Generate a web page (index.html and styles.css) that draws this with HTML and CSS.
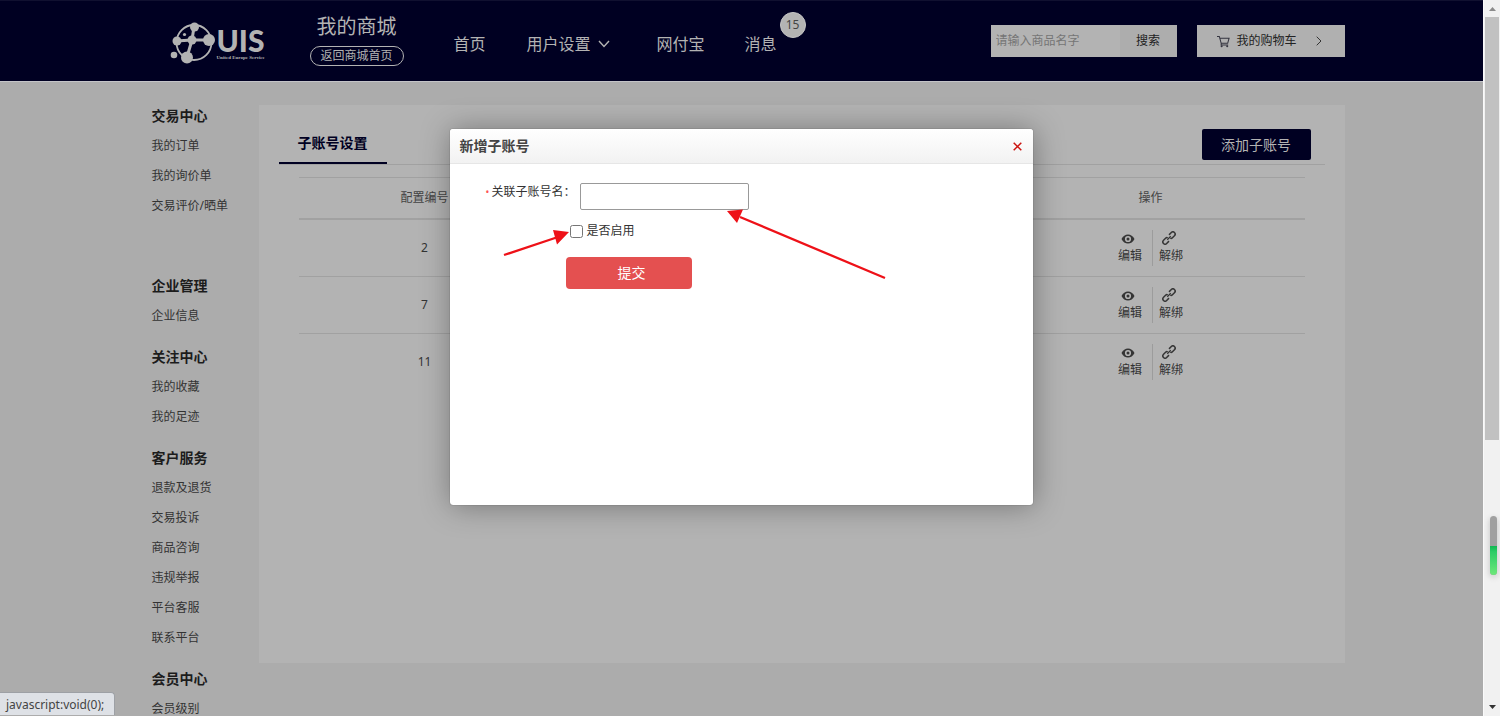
FILE: index.html
```html
<!DOCTYPE html>
<html lang="zh-CN">
<head>
<meta charset="utf-8">
<title>子账号设置</title>
<link rel="stylesheet" href="styles.css">
</head>
<body>
<svg class="defs" aria-hidden="true">
  <symbol id="eye" viewBox="0 0 14 10"><path fill="#353535" fill-rule="evenodd" d="M0.500 5C2 2 4.300.500 7 .500S12 2 13.500 5C12 8 9.700 9.500 7 9.500S2 8 .500 5ZM7 1.900a3.100 3.100 0 1 0 0 6.200 3.100 3.100 0 0 0 0-6.200Z"/><circle cx="7" cy="5" r="1.500" fill="#353535"/></symbol>
  <symbol id="link" viewBox="0 0 14 14"><g fill="none" stroke="#353535" stroke-width="1.500" transform="rotate(-45 7 7)"><path d="M4.800 9.200H1.500a2.200 2.200 0 0 1 0-4.400h3.200q1.300 0 1.300 1.200M9.200 4.800h3.300a2.200 2.200 0 0 1 0 4.400H9.300Q8 9.200 8 8"/><path stroke-width="1.200" d="M4.500 7h5"/></g></symbol>
</svg>
<div class="viewport">
  <header class="header">
    <div class="container header-row">
      <a class="logo" href="#" aria-label="UIS">
        <svg class="logo-mark" viewBox="0 0 46 42" aria-hidden="true">
          <g fill="none" stroke="#b3b3b3" stroke-width="1.800"><circle cx="24" cy="20.500" r="17.500"/><path stroke-width="3" d="M22 18l2-13M22 18L6 19M22 18l17 0M22 18l-5 17"/></g>
          <g fill="#b3b3b3"><circle cx="24.500" cy="5" r="4.500"/><circle cx="7" cy="19" r="4.500"/><circle cx="39" cy="18" r="6"/><circle cx="17" cy="35.500" r="6"/><circle cx="22" cy="18" r="4.500"/><circle cx="4" cy="33" r="3.300"/><circle cx="14.500" cy="12.500" r="1.600"/></g>
        </svg>
        <span class="logo-text"><b>UIS</b><small>United Europe Service</small></span>
      </a>
      <div class="mall">
        <span class="mall-title">我的商城</span>
        <a class="mall-home" href="#">返回商城首页</a>
      </div>
      <nav class="nav">
        <a href="#">首页</a>
        <button type="button">用户设置<svg width="12" height="8" viewBox="0 0 12 8" aria-hidden="true"><path d="M1 1l5 5.500L11 1" fill="none" stroke="#b3b3b3" stroke-width="1.400"/></svg></button>
        <a href="#">网付宝</a>
        <a class="message" href="#">消息<span class="badge">15</span></a>
      </nav>
      <form class="search">
        <input type="text" placeholder="请输入商品名字" aria-label="商品名字">
        <button type="button">搜索</button>
      </form>
      <a class="cart" href="#">
        <svg width="13" height="13" viewBox="0 0 14 13" aria-hidden="true"><path d="M0 1h2.500l2 7.500h7L13 3H3M4.500 8.500v1.700H12" fill="none" stroke="#33333f" stroke-width="1.100"/><circle cx="5" cy="11.700" r="1.100" fill="#33333f"/><circle cx="11" cy="11.700" r="1.100" fill="#33333f"/></svg>
        <span>我的购物车</span>
        <svg class="cart-arrow" width="6" height="10" viewBox="0 0 6 10" aria-hidden="true"><path d="M.7.700L5 5 .7 9.300" fill="none" stroke="#333" stroke-width="1"/></svg>
      </a>
    </div>
  </header>
  <main class="container body-row">
    <aside class="sidebar">
      <section class="group group-wide"><h2>交易中心</h2><a href="#">我的订单</a><a href="#">我的询价单</a><a href="#">交易评价/晒单</a></section>
      <section class="group"><h2>企业管理</h2><a href="#">企业信息</a></section>
      <section class="group"><h2>关注中心</h2><a href="#">我的收藏</a><a href="#">我的足迹</a></section>
      <section class="group"><h2>客户服务</h2><a href="#">退款及退货</a><a href="#">交易投诉</a><a href="#">商品咨询</a><a href="#">违规举报</a><a href="#">平台客服</a><a href="#">联系平台</a></section>
      <section class="group"><h2>会员中心</h2><a href="#">会员级别</a></section>
    </aside>
    <section class="panel">
      <div class="panel-head">
        <h1 class="tab">子账号设置</h1>
        <button class="add" type="button">添加子账号</button>
      </div>
      <table class="accounts">
        <colgroup><col class="col-id"><col><col class="col-action"></colgroup>
        <thead><tr><th>配置编号</th><th></th><th>操作</th></tr></thead>
        <tbody>
          <tr><td>2</td><td></td><td><div class="actions"><a href="#"><svg class="eye"><use href="#eye"/></svg>编辑</a><a href="#"><svg class="link"><use href="#link"/></svg>解绑</a></div></td></tr>
          <tr><td>7</td><td></td><td><div class="actions"><a href="#"><svg class="eye"><use href="#eye"/></svg>编辑</a><a href="#"><svg class="link"><use href="#link"/></svg>解绑</a></div></td></tr>
          <tr><td>11</td><td></td><td><div class="actions"><a href="#"><svg class="eye"><use href="#eye"/></svg>编辑</a><a href="#"><svg class="link"><use href="#link"/></svg>解绑</a></div></td></tr>
        </tbody>
      </table>
    </section>
  </main>
  <div class="dialog" role="dialog" aria-labelledby="dialog-title">
    <div class="dialog-head">
      <h2 id="dialog-title">新增子账号</h2>
      <button type="button" aria-label="关闭"><svg width="9" height="9" viewBox="0 0 9 9" aria-hidden="true"><path d="M.7.700l7.600 7.600M8.300.700L.7 8.300" stroke="#cc1410" stroke-width="1.500"/></svg></button>
    </div>
    <form class="dialog-form">
      <div class="field"><label for="account"><i>•</i>关联子账号名：</label><input id="account" type="text"></div>
      <div class="check"><input id="enabled" type="checkbox"><label for="enabled">是否启用</label></div>
      <button class="submit" type="button">提交</button>
    </form>
    <svg class="arrows" viewBox="0 0 450 120" aria-hidden="true">
      <g fill="#ee1118" stroke="#ee1118"><path stroke-width="2.300" d="M54 66L108 48M435 89L290 28"/><path stroke="none" d="M119 43L107 55.500 103 41ZM277 22l16-1.500-6 13.500Z"/></g>
    </svg>
  </div>
  <div class="status">javascript:void(0);</div>
</div>
<div class="scrollbar" aria-hidden="true">
  <svg width="7" height="4" viewBox="0 0 7 4"><path d="M0 4L3.500 0 7 4Z" fill="#8b8b8b"/></svg>
  <div class="track"><div class="thumb"></div></div>
  <svg width="7" height="4" viewBox="0 0 7 4"><path d="M0 0h7L3.500 4Z" fill="#333"/></svg>
  <div class="meter"><div class="meter-fill"></div></div>
</div>
</body>
</html>
```
FILE: styles.css
```css
* { box-sizing: border-box; }
body {
  margin: 0;
  display: flex;
  height: 100vh;
  overflow: hidden;
  background: #acacac;
  color: #333;
  font: 12px/18px "Noto Sans", "Noto Sans CJK SC", sans-serif;
}
a { color: inherit; text-decoration: none; }
button, input { font: inherit; color: inherit; margin: 0; }
button { border: 0; padding: 0; background: none; }
h1, h2 { margin: 0; }
.defs { position: absolute; width: 0; height: 0; }
.viewport { position: relative; flex: 1; min-width: 0; overflow: hidden; }
.container { max-width: 1206px; margin: 0 auto; }

.header {
  background: #000022;
  border-top: 1px solid #101030;
  border-bottom: 1px solid #c4c4c8;
  color: #b3b3b3;
}
.header-row { display: flex; align-items: flex-start; height: 80px; padding-left: 31px; }
.logo { display: flex; width: 140px; padding-top: 21px; gap: 1px; }
.logo-mark { width: 46px; height: 42px; }
.logo-text { display: flex; flex-direction: column; padding-top: 3px; }
.logo-text b { font: 900 30px/30px Lato, sans-serif; }
.logo-text small { font: 700 5px/6px "Liberation Serif", serif; }
.mall { display: flex; flex-direction: column; align-items: center; padding-top: 11px; gap: 4px; }
.mall-title { font-size: 20px; line-height: 30px; }
.mall-home { border: 1px solid #b3b3b3; border-radius: 10px; padding: 0 10px; line-height: 18px; }
.nav { display: flex; gap: 47px; margin: 31px auto 0 50px; font-size: 16px; line-height: 24px; }
.nav a:first-child { margin-right: -6px; }
.nav button { display: flex; align-items: center; gap: 7px; }
.message { position: relative; margin-left: -7px; }
.badge {
  position: absolute;
  left: 35px;
  top: -20px;
  width: 26px;
  height: 26px;
  border: 1px solid #c6c6c6;
  border-radius: 50%;
  background: #b3b3b3;
  color: #444;
  font-size: 12px;
  text-align: center;
}
.search { display: flex; width: 186px; height: 32px; margin: 24px 20px 0 0; background: #b3b3b3; color: #222; }
.search input { flex: 1; min-width: 0; padding: 0 5px; border: 0; background: none; }
.search input::placeholder { color: #757575; opacity: 1; }
.search button { width: 57px; background: #adadad; }
.cart {
  display: flex;
  align-items: center;
  width: 148px;
  height: 32px;
  margin-top: 24px;
  padding: 0 23px 0 20px;
  gap: 7px;
  background: #b0b0b0;
  color: #222;
}
.cart-arrow { margin-left: auto; }

.body-row { display: flex; align-items: flex-start; }
.sidebar { width: 120px; flex: none; padding: 19px 0 0 13px; line-height: 30px; }
.group { display: flex; flex-direction: column; margin-bottom: 11px; }
.group-wide { margin-bottom: 50px; }
.group h2 { font-size: 14px; color: #1c1c1c; }
.panel { flex: 1; min-width: 0; height: 558px; margin-top: 23px; padding: 24px 20px; background: #b3b3b3; }
.panel-head { display: flex; align-items: flex-start; justify-content: space-between; height: 36px; padding-right: 14px; border-bottom: 1px solid #a1a1a1; }
.tab { height: 35px; padding: 0 19px; border-bottom: 2px solid #000022; color: #000022; font-size: 14px; line-height: 28px; }
.add { width: 109px; height: 31px; border-radius: 2px; background: #000022; color: #b3b3b3; font-size: 14px; }
.accounts { width: calc(100% - 40px); margin: 12px 20px 0; border-collapse: separate; border-spacing: 0; table-layout: fixed; text-align: center; }
.col-id { width: 252px; }
.col-action { width: 308px; }
.accounts th { height: 43px; padding: 0; border-top: 1px solid #a1a1a1; border-bottom: 2px solid #a1a1a1; font-weight: 400; color: #444; }
.accounts td { height: 57px; padding: 0 0 1px; border-bottom: 1px solid #a1a1a1; font-size: 12px; }
.accounts tr:last-child td { border-bottom: 0; }
.actions { display: flex; justify-content: center; line-height: 16px; }
.actions a { display: flex; flex-direction: column; align-items: center; height: 36px; padding: 0 10px 0 8px; }
.actions a + a { padding: 0 8px 0 6px; border-left: 1px solid #9c9c9c; }
.actions svg { width: 14px; height: 14px; margin: 1px 4px 3px 0; flex: none; }
.actions .eye { height: 10px; margin: 4px 4px 4px 0; }

.dialog {
  position: absolute;
  top: 129px;
  left: calc(50% - 292px);
  width: 583px;
  height: 376px;
  border-radius: 3px;
  background: #fff;
  box-shadow: 1px 1px 30px rgba(0, 0, 0, .35), 0 0 1px #444;
}
.dialog-head {
  display: flex;
  align-items: center;
  justify-content: space-between;
  height: 35px;
  padding: 0 11px 0 10px;
  border-bottom: 1px solid #e6e6e6;
  border-radius: 3px 3px 0 0;
  background: linear-gradient(#fff, #f2f2f2);
}
.dialog-head h2 { font-size: 14px; color: #444; }
.dialog-head button { display: flex; }
.dialog-form { padding: 19px 36px; }
.field { display: flex; gap: 5px; }
.field label { width: 89px; white-space: nowrap; }
.field i { display: inline-block; width: 6px; color: #f55; font-size: 10px; font-style: normal; }
.field input { width: 169px; height: 27px; border: 1px solid #999; border-radius: 2px; }
.check { display: flex; align-items: center; gap: 4px; margin: 12px 0 17px 84px; }
.check input { width: 13px; height: 13px; }
.submit { display: block; width: 126px; height: 32px; margin-left: 80px; padding-left: 6px; border-radius: 4px; background: #e45050; color: #fff; font-size: 14px; }
.arrows { position: absolute; left: 0; top: 60px; width: 450px; height: 120px; pointer-events: none; }

.status { position: absolute; left: 0; bottom: 1px; padding: 2px 10px 1px 6px; border: 1px solid #9da0a5; border-width: 1px 1px 0 0; border-radius: 0 4px 0 0; background: #dee1e6; font: 12px/19px "Noto Sans", sans-serif; color: #444; }

.scrollbar { position: relative; display: flex; flex-direction: column; align-items: center; justify-content: space-between; width: 17px; padding: 7px 0; background: #f1f1f1; border-left: 1px solid #fafafa; }
.track { flex: 1; width: 14px; padding: 6px 0; }
.thumb { height: 62%; background: #c1c1c1; }
.meter { position: absolute; right: 3px; top: 72%; width: 7px; height: 59px; padding-top: 30px; border-radius: 4px; background: #a0a0a0; box-shadow: 0 2px 6px rgba(0, 0, 0, .2); overflow: hidden; }
.meter-fill { height: 29px; background: linear-gradient(#10b850, #2ccc66 20%, #6ee87a); }
```
